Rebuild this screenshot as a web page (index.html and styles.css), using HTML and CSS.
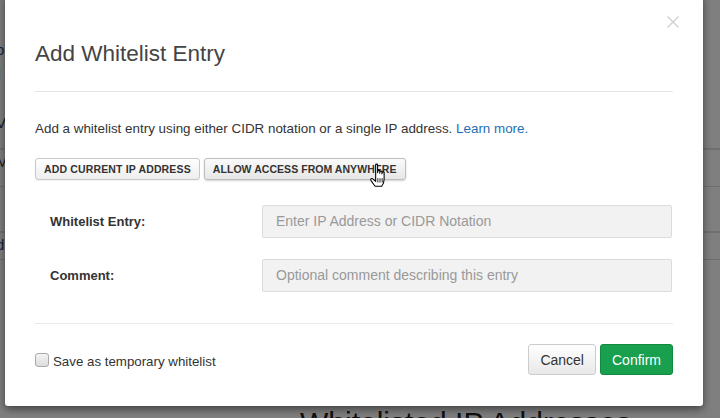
FILE: index.html
```html
<!DOCTYPE html>
<html>
<head>
<meta charset="utf-8">
<link rel="stylesheet" href="styles.css">
</head>
<body>
<div class="page">
  <div class="page-top">M</div>
  <div class="page-rows">
    <div class="page-row r1"><span class="frag blue">o</span></div>
    <div class="page-row r2"><span class="frag bold">I</span></div>
    <div class="page-row r3"><span class="frag">V</span></div>
    <div class="page-row r4"><span class="frag">M</span></div>
    <div class="page-row r5"></div>
    <div class="page-row r6"><span class="frag blue">d</span></div>
  </div>
  <h2 class="page-heading">Whitelisted IP Addresses</h2>
</div>
<div class="overlay"></div>
<div class="modal">
  <div class="modal-header">
    <h1 class="modal-title">Add Whitelist Entry</h1>
    <button class="close" aria-label="Close">
      <svg width="12" height="12" viewBox="0 0 12 12"><path d="M0.5 0.5 L11.5 11.5 M11.5 0.5 L0.5 11.5" stroke="#cfcfcf" stroke-width="1.3" fill="none"/></svg>
    </button>
  </div>
  <div class="modal-body">
    <p class="desc">Add a whitelist entry using either CIDR notation or a single IP address. <a class="link" href="#">Learn more.</a></p>
    <div class="quick-buttons">
      <button class="btn-small">ADD CURRENT IP ADDRESS</button>
      <button class="btn-small hover">ALLOW ACCESS FROM ANYWHERE</button>
    </div>
    <div class="form-grid">
      <label class="form-label">Whitelist Entry:</label>
      <div class="form-input">Enter IP Address or CIDR Notation</div>
      <label class="form-label">Comment:</label>
      <div class="form-input">Optional comment describing this entry</div>
    </div>
  </div>
  <div class="modal-footer">
    <label class="check">
      <span class="checkbox"></span>
      <span class="check-text">Save as temporary whitelist</span>
    </label>
    <div class="actions">
      <button class="btn btn-cancel">Cancel</button>
      <button class="btn btn-confirm">Confirm</button>
    </div>
  </div>
  <svg class="cursor" width="22" height="26" viewBox="0 0 20 24">
    <path d="M6 1.5 C6 0.7 7.8 0.7 7.8 1.5 L7.8 9 L8 7.3 C8 6.5 9.8 6.5 9.8 7.3 L9.8 9.5 L10 8 C10 7.2 11.8 7.2 11.8 8 L11.8 10 L12 8.8 C12 8 13.8 8 13.8 8.8 L13.8 15 C13.8 18 12.5 20.5 11.5 21.5 L5.5 21.5 C4.5 20 3 18.5 1.6 16 C1 14.8 1.8 13.8 3 14.5 L6 17 Z" fill="#fff" stroke="#000" stroke-width="1" stroke-linejoin="round"/>
    <path d="M8 14 L8 18 M10 14 L10 18 M12 14 L12 18" stroke="#000" stroke-width="0.8"/>
  </svg>
</div>
</body>
</html>
```

FILE: styles.css
```css
html, body {
  margin: 0;
  padding: 0;
  width: 720px;
  height: 418px;
  overflow: hidden;
  font-family: "Liberation Sans", Arial, sans-serif;
  background: #ffffff;
}

.page {
  position: absolute;
  left: 0;
  top: 0;
  width: 720px;
  height: 418px;
  overflow: hidden;
  background: #ffffff;
}

.page-top {
  font-size: 14px;
  color: #333;
  padding-left: 690px;
  margin-top: -8px;
}

.page-rows {
  margin-top: 30px;
}

.page-row {
  height: 36px;
  border-bottom: 1px solid #dddddd;
  position: relative;
}

.page-row.r1 { height: 24px; border-bottom: none; }
.page-row.r2 { height: 49px; border-bottom: none; }
.page-row.r3 { height: 37px; border-bottom: 2px solid #e0e0e0; }
.page-row.r4 { height: 36px; }
.page-row.r5 { height: 44px; border-bottom: 2px solid #e0e0e0; }
.page-row.r6 { height: 26px; }

.frag {
  font-size: 15px;
  color: #333;
  margin-left: -4px;
  line-height: 24px;
}
.frag.blue { color: #1a4a8a; }
.frag.bold { font-weight: bold; font-size: 18px; }

.page-heading {
  position: absolute;
  left: 300px;
  top: 406px;
  margin: 0;
  font-size: 30px;
  font-weight: normal;
  color: #222;
  white-space: nowrap;
}

.overlay {
  position: absolute;
  inset: 0;
  background: rgba(0, 0, 0, 0.5);
}

.modal {
  position: absolute;
  left: 5px;
  top: -6px;
  width: 698px;
  height: 412px;
  background: #ffffff;
  border-radius: 0 0 3px 3px;
  box-shadow: 0 3px 9px rgba(0, 0, 0, 0.5);
  display: flex;
  flex-direction: column;
  box-sizing: border-box;
  padding: 0 30px;
}

.modal-header {
  padding-top: 46px;
  padding-bottom: 23px;
  border-bottom: 1px solid #e5e5e5;
  position: relative;
}

.modal-title {
  margin: 0;
  font-size: 22.5px;
  line-height: 28px;
  font-weight: normal;
  color: #444444;
}

.close {
  position: absolute;
  right: -6px;
  top: 22px;
  border: none;
  background: none;
  padding: 0;
  width: 12px;
  height: 12px;
  display: block;
}
.close svg { display: block; }

.modal-body {
  padding-top: 28px;
  padding-bottom: 31px;
  border-bottom: 1px solid #e9e9e9;
}

.desc {
  margin: 0;
  font-size: 13.4px;
  line-height: 18px;
  color: #333;
}

.link {
  color: #1f6fb5;
  text-decoration: none;
}

.quick-buttons {
  display: flex;
  gap: 4px;
  margin-top: 20px;
}

.btn-small {
  font-family: "Liberation Sans", Arial, sans-serif;
  font-size: 10.5px;
  font-weight: bold;
  color: #333;
  height: 22px;
  padding: 0 8px;
  border: 1px solid #c8c8c8;
  border-radius: 3px;
  background: linear-gradient(#ffffff, #eeeeee);
  letter-spacing: 0.15px;
  box-shadow: 0 1px 1px rgba(0,0,0,0.05);
}
.btn-small.hover {
  background: linear-gradient(#fafafa, #e6e6e6);
  border-color: #bdbdbd;
  box-shadow: 0 1px 2px rgba(0,0,0,0.18);
  padding: 0 8px;
  letter-spacing: 0.05px;
}

.form-grid {
  display: grid;
  grid-template-columns: 227px 410px;
  grid-auto-rows: 33px;
  row-gap: 21px;
  margin-top: 25px;
  align-items: center;
}

.form-label {
  padding-left: 15px;
  font-size: 13px;
  font-weight: bold;
  color: #333;
}

.form-input {
  height: 33px;
  box-sizing: border-box;
  background: #f2f2f2;
  border: 1px solid #dcdcdc;
  border-radius: 2px;
  padding-left: 13px;
  font-size: 14px;
  line-height: 31px;
  color: #999999;
}

.modal-footer {
  display: flex;
  justify-content: space-between;
  align-items: center;
  padding-top: 20px;
}

.check {
  display: flex;
  align-items: center;
  gap: 4px;
}

.checkbox {
  width: 12px;
  height: 12px;
  border: 1px solid #a9a9a9;
  border-radius: 3px;
  background: linear-gradient(#f4f4f4, #dcdcdc);
  display: block;
}

.check-text {
  font-size: 13.3px;
  color: #333;
  margin-top: 4px;
}

.actions {
  display: flex;
  gap: 4px;
}

.btn {
  font-family: "Liberation Sans", Arial, sans-serif;
  font-size: 14px;
  height: 31px;
  padding: 0 11px;
  border-radius: 3px;
}

.btn-cancel {
  color: #333;
  background: linear-gradient(#ffffff, #e8e8e8);
  border: 1px solid #cccccc;
}

.btn-confirm {
  color: #ffffff;
  background: #18a04f;
  border: 1px solid #118a3f;
  padding: 0 11px;
}

.cursor {
  position: absolute;
  left: 364px;
  top: 169px;
}
```
